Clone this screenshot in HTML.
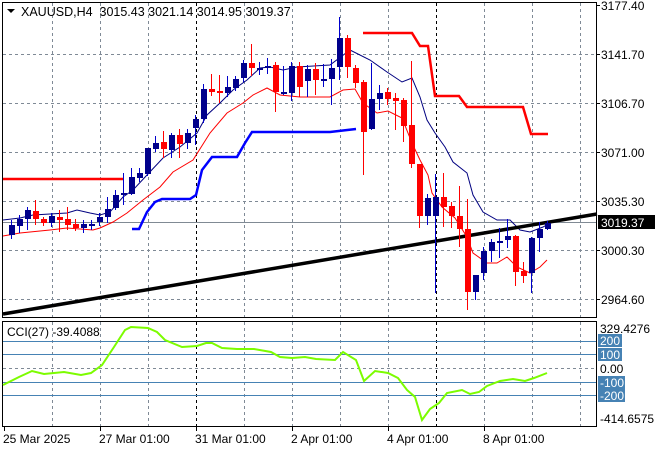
<!DOCTYPE html>
<html><head><meta charset="utf-8"><style>
html,body{margin:0;padding:0;background:#fff;width:660px;height:450px;overflow:hidden}
svg{display:block}
text{font-family:"Liberation Sans",sans-serif;font-size:12px;fill:#000}
</style></head><body>
<svg width="660" height="450" viewBox="0 0 660 450" xmlns="http://www.w3.org/2000/svg">
<rect width="660" height="450" fill="#fff"/>
<g stroke="#7f8a96" stroke-width="1" stroke-dasharray="3,3" fill="none">
<path d="M52.5 3V317M100.5 3V317M148.5 3V317M244.5 3V317M292.5 3V317M340.5 3V317M388.5 3V317M484.5 3V317M532.5 3V317M580.5 3V317"/>
<path d="M3 54.5H596M3 103.5H596M3 152.5H596M3 201.5H596M3 250.5H596M3 299.5H596"/>
<path d="M52.5 322V426M100.5 322V426M148.5 322V426M244.5 322V426M292.5 322V426M340.5 322V426M388.5 322V426M484.5 322V426M532.5 322V426M580.5 322V426"/>
<path d="M3 368.5H596"/>
</g>
<g stroke="#000" stroke-width="1" stroke-dasharray="3,3">
<path d="M196.5 3V317M436.5 3V317M196.5 322V426M436.5 322V426"/>
</g>
<path d="M3 222.5H596" stroke="#808a94" stroke-width="1"/>
<path d="M3 179H123" stroke="#f00" stroke-width="2.5"/>
<polyline fill="none" stroke="#0000ff" stroke-width="2.5" points="132,229 139,229 147,212 155,202 162,199 190,199 196,195 202,170 212,157 237,157 245,143 252,132 330,132 356,129"/>
<polyline fill="none" stroke="#f00" stroke-width="2.5" points="363,33 412,33 420,46 428,46 435,96 459,96 467,107 523,107 531,134 548,134"/>
<polyline fill="none" stroke="#f00" stroke-width="1" points="3,236 20,233 50,230 67,228 93,230 100,228 113,222 127,213 143,200 160,187 173,172 193,160 210,133 227,113 243,103 253,95 267,88 280,95 300,97 330,97 343,90 355,89 363,103 377,113 388,111 402,118 412,143 420,160 428,175 432,193 442,207 455,218 467,237 473,253 487,263 497,263 507,257 517,267 530,273 540,267 547,260"/>
<polyline fill="none" stroke="#000080" stroke-width="1" points="3,220 20,218 33,215 67,213 77,210 90,213 100,215 110,212 123,197 133,190 147,175 163,158 180,147 197,133 207,115 220,103 233,90 247,80 260,68 270,67 283,70 297,67 330,65 350,50 370,60 387,72 402,82 412,78 420,97 427,120 435,133 445,147 453,162 467,173 473,195 483,212 497,220 510,220 520,230 530,232 543,227 550,223"/>
<path d="M3 314L597 214" stroke="#000" stroke-width="3.5"/>
<rect x="2.5" y="2.5" width="594" height="315" fill="none" stroke="#000"/>
<rect x="2.5" y="321.5" width="594" height="105" fill="none" stroke="#000"/>
<g stroke="#4682b4" stroke-width="1">
<path d="M3 341.5H596M3 354.5H596M3 382.5H596M3 395.5H596"/>
</g>
<polyline fill="none" stroke="#7cfc00" stroke-width="2" points="3,385 19,377 32,371 44,374 64,372 81,375 91,373 102,365 114,347 125,330 131,327 148,328 157,332 165,340 182,347 197,346 206,343 212,343 222,348 237,349 254,349 271,352 280,357 292,358 305,357 316,359 335,360 343,352 356,360 364,381 375,371 388,373 398,378 407,390 415,397 422,420 430,409 439,403 447,393 462,390 470,394 479,392 487,386 500,381 513,379 525,381 534,378 547,373"/>
<g>
<text x="601" y="10">3177.40</text>
<text x="601" y="59">3141.70</text>
<text x="601" y="108">3106.70</text>
<text x="601" y="157">3071.00</text>
<text x="601" y="206">3035.30</text>
<text x="601" y="255">3000.30</text>
<text x="601" y="304">2964.60</text>
<rect x="598" y="215" width="57" height="14" fill="#000"/>
<text x="601" y="227" style="fill:#fff">3019.37</text>
<text x="600" y="333">329.4276</text>
<rect x="598" y="334" width="24" height="13" fill="#4682b4"/>
<text x="600" y="345" style="fill:#fff">200</text>
<rect x="598" y="348" width="24" height="13" fill="#4682b4"/>
<text x="600" y="359" style="fill:#fff">100</text>
<text x="600" y="373">0.00</text>
<rect x="598" y="376" width="27" height="13" fill="#4682b4"/>
<text x="600" y="387" style="fill:#fff">-100</text>
<rect x="598" y="389" width="27" height="13" fill="#4682b4"/>
<text x="600" y="400" style="fill:#fff">-200</text>
<text x="600" y="423">-414.6575</text>
</g>
<g stroke="#000"><path d="M597 5.5h3M597 54.5h3M597 103.5h3M597 152.5h3M597 201.5h3M597 250.5h3M597 299.5h3"/></g>
<g stroke="#000"><path d="M4.5 427v4M100.5 427v4M196.5 427v4M292.5 427v4M388.5 427v4M484.5 427v4"/></g>
<text x="3" y="443">25 Mar 2025</text>
<text x="99" y="443">27 Mar 01:00</text>
<text x="195" y="443">31 Mar 01:00</text>
<text x="291" y="443">2 Apr 01:00</text>
<text x="387" y="443">4 Apr 01:00</text>
<text x="483" y="443">8 Apr 01:00</text>
<path d="M7 9h8l-4 4z" fill="#000"/>
<text x="21" y="16" xml:space="preserve" style="white-space:pre;font-size:12.5px">XAUUSD,H4  3015.43 3021.14 3014.95 3019.37</text>
<text x="7" y="336">CCI(27) -39.4088</text>
<g stroke-width="1">
<path stroke="#0000cd" d="M11.5 220V239M19.5 215V233M27.5 207V230M51.5 213V227M83.5 220V233M91.5 220V230M99.5 213V226M107.5 197V223M115.5 190V210M123.5 173V205M131.5 168V195M139.5 168V182M147.5 148V176M155.5 136V152M171.5 133V158M187.5 129V149M195.5 115V145M203.5 84V123M227.5 76V97M235.5 76V91M243.5 60V82M259.5 62V75M267.5 58V74M283.5 66V95M291.5 62V101M307.5 65V97M323.5 64V87M331.5 59V105M339.5 17V80M371.5 63V130M379.5 85V110M427.5 194V225M435.5 174V293M475.5 275V300M483.5 247V280M491.5 239V262M499.5 228V258M507.5 219V248M531.5 237V293M539.5 222V252M547.5 221V230"/>
<path stroke="#f00" d="M35.5 200V225M43.5 217V226M59.5 210V232M67.5 207V230M75.5 219V231M163.5 131V158M179.5 129V158M211.5 74V96M219.5 75V103M251.5 44V76M275.5 62V112M299.5 62V97M315.5 63V95M347.5 35V78M355.5 65V88M363.5 80V175M387.5 88V105M395.5 93V130M403.5 98V142M411.5 61V168M419.5 164V228M443.5 173V227M451.5 202V228M459.5 186V247M467.5 199V310M515.5 235V286M523.5 262V283"/>
<g fill="#00008b">
<rect x="9" y="225" width="6" height="10"/><rect x="17" y="219" width="6" height="7"/><rect x="25" y="210" width="6" height="9"/><rect x="49" y="216" width="6" height="7"/><rect x="81" y="224" width="6" height="4"/><rect x="89" y="224" width="6" height="2"/><rect x="97" y="217" width="6" height="5"/><rect x="105" y="209" width="6" height="8"/><rect x="113" y="195" width="6" height="13"/><rect x="121" y="193" width="6" height="2"/><rect x="129" y="177" width="6" height="17"/><rect x="137" y="173" width="6" height="5"/><rect x="145" y="148" width="6" height="26"/><rect x="153" y="143" width="6" height="6"/><rect x="169" y="135" width="6" height="15"/><rect x="185" y="133" width="6" height="10"/><rect x="193" y="119" width="6" height="9"/><rect x="201" y="89" width="6" height="30"/><rect x="225" y="87" width="6" height="6"/><rect x="233" y="79" width="6" height="9"/><rect x="241" y="63" width="6" height="15"/><rect x="257" y="68" width="6" height="2"/><rect x="265" y="66" width="6" height="2"/><rect x="281" y="92" width="6" height="2"/><rect x="289" y="66" width="6" height="27"/><rect x="305" y="69" width="6" height="12"/><rect x="321" y="79" width="6" height="2"/><rect x="329" y="68" width="6" height="11"/><rect x="337" y="38" width="6" height="29"/><rect x="369" y="99" width="6" height="30"/><rect x="377" y="93" width="6" height="6"/><rect x="425" y="198" width="6" height="18"/><rect x="433" y="197" width="6" height="19"/><rect x="473" y="275" width="6" height="17"/><rect x="481" y="251" width="6" height="22"/><rect x="489" y="242" width="6" height="9"/><rect x="497" y="241" width="6" height="2"/><rect x="505" y="236" width="6" height="4"/><rect x="529" y="238" width="6" height="35"/><rect x="537" y="229" width="6" height="9"/><rect x="545" y="223" width="6" height="6"/>
</g>
<g fill="#f00">
<rect x="33" y="211" width="6" height="8"/><rect x="41" y="219" width="6" height="4"/><rect x="57" y="217" width="6" height="3"/><rect x="65" y="219" width="6" height="6"/><rect x="73" y="224" width="6" height="4"/><rect x="161" y="142" width="6" height="7"/><rect x="177" y="135" width="6" height="9"/><rect x="209" y="89" width="6" height="3"/><rect x="217" y="91" width="6" height="2"/><rect x="249" y="63" width="6" height="5"/><rect x="273" y="65" width="6" height="27"/><rect x="297" y="66" width="6" height="21"/><rect x="313" y="69" width="6" height="11"/><rect x="345" y="38" width="6" height="29"/><rect x="353" y="68" width="6" height="15"/><rect x="361" y="82" width="6" height="50"/><rect x="385" y="92" width="6" height="7"/><rect x="393" y="98" width="6" height="3"/><rect x="401" y="100" width="6" height="26"/><rect x="409" y="125" width="6" height="39"/><rect x="417" y="164" width="6" height="52"/><rect x="441" y="197" width="6" height="10"/><rect x="449" y="206" width="6" height="10"/><rect x="457" y="216" width="6" height="13"/><rect x="465" y="229" width="6" height="63"/><rect x="513" y="236" width="6" height="36"/><rect x="521" y="271" width="6" height="5"/>
</g>
</g>
</svg>
</body></html>
